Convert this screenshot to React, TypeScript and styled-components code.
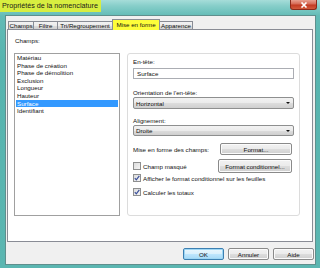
import React from "react";
import styled, { createGlobalStyle } from "styled-components";

const GlobalStyle = createGlobalStyle`
  html, body { margin: 0; padding: 0; width: 320px; height: 268px; overflow: hidden; }
  body { font-family: "Liberation Sans", Arial, sans-serif; }
  * { box-sizing: border-box; }
`;

const Window = styled.div`
  width: 320px;
  height: 268px;
  display: flex;
  flex-direction: column;
  padding: 0 4px 3px 5px;
  background: linear-gradient(180deg, #a6ddd9 0px, #86cec9 6px, #62bbb6 16px, #57b4af 60px, #5bb6b1 100%);
`;

const TitleBar = styled.div`
  height: 16px;
  margin: 0 -4px 0 -5px;
  display: flex;
  align-items: flex-start;
`;

const Title = styled.div`
  height: 12px;
  line-height: 12px;
  padding: 0 3px 0 2px;
  background: #d8ee40;
  color: #1a1a1a;
  font-size: 7.2px;
  white-space: nowrap;
`;

const CloseButton = styled.div`
  margin-left: auto;
  margin-right: 3px;
  width: 27px;
  height: 10px;
  border: 1px solid #8b2a1a;
  border-top: none;
  border-radius: 0 0 3px 3px;
  background: linear-gradient(180deg, #e8a090 0%, #d66a55 45%, #c23a22 55%, #d25a3c 100%);
  display: flex;
  align-items: center;
  justify-content: center;
`;

const Client = styled.div`
  flex: 1;
  background: #f0f0f0;
  border: 1px solid #5f8f8d;
  display: flex;
  flex-direction: column;
  padding: 3px 0 4px 0;
`;

const TabStrip = styled.div`
  display: flex;
  align-items: flex-end;
  height: 11px;
  padding-left: 3px;
  position: relative;
  z-index: 1;
`;

const Tab = styled.div<{ $active?: boolean; $w: number }>`
  width: ${(p) => p.$w}px;
  height: ${(p) => (p.$active ? 11 : 9)}px;
  line-height: ${(p) => (p.$active ? 10 : 8)}px;
  font-size: 6.2px;
  color: #111;
  text-align: center;
  white-space: nowrap;
  border: 1px solid #898c95;
  border-bottom: ${(p) => (p.$active ? "none" : "1px solid #898c95")};
  margin-left: -1px;
  background: ${(p) =>
    p.$active ? "#fdfd3a" : "linear-gradient(180deg, #f2f2f2 0%, #ebebeb 50%, #dddddd 51%, #cfcfcf 100%)"};
`;

const Panel = styled.div`
  margin: -1px 2px 0 1px;
  height: 213px;
  background: #ffffff;
  border: 1px solid #898c95;
  display: grid;
  grid-template-columns: 106px 173px;
  grid-template-rows: 16px 1fr;
  column-gap: 7px;
  padding: 7px 0 0 6px;
`;

const FieldLabel = styled.div`
  font-size: 6.2px;
  line-height: 8px;
  color: #111;
  white-space: nowrap;
`;

const ListLabel = styled(FieldLabel)`
  padding-left: 1px;
  grid-column: 1;
`;

const ListBox = styled.div`
  grid-column: 1;
  grid-row: 2;
  height: 163px;
  border: 1px solid #a0a0a0;
  background: #fff;
  padding: 0 1px;
`;

const ListItem = styled.div<{ $selected?: boolean }>`
  height: 7.6px;
  line-height: 7.6px;
  font-size: 6.2px;
  padding-left: 1px;
  white-space: nowrap;
  color: ${(p) => (p.$selected ? "#fff" : "#111")};
  background: ${(p) => (p.$selected ? "#3399ff" : "transparent")};
`;

const GroupBox = styled.div`
  grid-column: 2;
  grid-row: 2;
  height: 163px;
  border: 1px solid #dcdcdc;
  border-radius: 3px;
  padding: 4px 5px;
  display: flex;
  flex-direction: column;
`;

const TextBox = styled.div`
  margin-top: 2px;
  height: 11px;
  border: 1px solid #abadb3;
  background: #fff;
  font-size: 6.2px;
  line-height: 9px;
  padding-left: 3px;
  color: #111;
`;

const Select = styled.div<{ $h: number }>`
  height: ${(p) => p.$h}px;
  border: 1px solid #8e8f8f;
  border-radius: 2px;
  background: linear-gradient(180deg, #f2f2f2 0%, #ebebeb 50%, #dddddd 51%, #cfcfcf 100%);
  display: flex;
  align-items: center;
  padding: 0 3px 0 2px;
  font-size: 6.2px;
  color: #111;
`;

const SelectText = styled.span`
  flex: 1;
`;

const Arrow = styled.span`
  width: 0;
  height: 0;
  border-left: 2px solid transparent;
  border-right: 2px solid transparent;
  border-top: 2.5px solid #111;
`;

const Spacer = styled.div<{ $h: number }>`
  height: ${(p) => p.$h}px;
  flex: none;
`;

const Row = styled.div<{ $h: number }>`
  height: ${(p) => p.$h}px;
  display: flex;
  align-items: center;
`;

const Button = styled.div<{ $w: number; $h?: number; $default?: boolean }>`
  width: ${(p) => p.$w}px;
  height: ${(p) => p.$h ?? 12}px;
  border: 1px solid ${(p) => (p.$default ? "#3c7fb1" : "#8a8a8a")};
  border-radius: 2px;
  background: ${(p) =>
    p.$default
      ? "linear-gradient(180deg, #eaf6fd 0%, #d9f0fc 50%, #bee6fd 51%, #a7d9f5 100%)"
      : "linear-gradient(180deg, #f2f2f2 0%, #ebebeb 50%, #dddddd 51%, #cfcfcf 100%)"};
  box-shadow: inset 0 0 0 1px ${(p) => (p.$default ? "#9ed6f4" : "#fbfbfb")};
  font-size: 6.2px;
  color: #111;
  display: flex;
  align-items: center;
  justify-content: center;
  white-space: nowrap;
`;

const RowButton = styled(Button)`
  margin-left: auto;
  margin-right: 2px;
`;

const CheckBox = styled.div`
  width: 8px;
  height: 8px;
  flex: none;
  border: 1px solid #8e8f8f;
  background: linear-gradient(135deg, #dcdcdc 0%, #f4f4f4 100%);
  display: flex;
  align-items: center;
  justify-content: center;
  margin-right: 2px;
`;

const CheckLabel = styled.span`
  font-size: 6.2px;
  color: #111;
  white-space: nowrap;
`;

const Footer = styled.div`
  display: flex;
  justify-content: flex-end;
  gap: 4px;
  margin: 6px 1px 0 0;
`;

const Check = ({ checked }: { checked?: boolean }) => (
  <CheckBox>
    {checked && (
      <svg width="6" height="6" viewBox="0 0 6 6">
        <path d="M0.8 3.2 L2.3 4.8 L5.3 0.9" fill="none" stroke="#3a4f9a" strokeWidth="1.2" />
      </svg>
    )}
  </CheckBox>
);

const fields = [
  "Matériau",
  "Phase de création",
  "Phase de démolition",
  "Exclusion",
  "Longueur",
  "Hauteur",
  "Surface",
  "Identifiant",
];

const tabs: { label: string; w: number; active?: boolean }[] = [
  { label: "Champs", w: 26 },
  { label: "Filtre", w: 25 },
  { label: "Tri/Regroupement", w: 56 },
  { label: "Mise en forme", w: 48, active: true },
  { label: "Apparence", w: 34 },
];

export default function App() {
  return (
    <>
      <GlobalStyle />
      <Window>
        <TitleBar>
          <Title>Propriétés de la nomenclature</Title>
          <CloseButton>
            <svg width="8" height="6" viewBox="0 0 8 6">
              <path d="M1.5 0.5 L6.5 5.5 M6.5 0.5 L1.5 5.5" stroke="#fff" strokeWidth="1.6" />
            </svg>
          </CloseButton>
        </TitleBar>
        <Client>
          <TabStrip>
            {tabs.map((t) => (
              <Tab key={t.label} $w={t.w} $active={t.active}>
                {t.label}
              </Tab>
            ))}
          </TabStrip>
          <Panel>
            <ListLabel>Champs:</ListLabel>
            <ListBox>
              {fields.map((f) => (
                <ListItem key={f} $selected={f === "Surface"}>
                  {f}
                </ListItem>
              ))}
            </ListBox>
            <GroupBox>
              <FieldLabel>En-tête:</FieldLabel>
              <TextBox>Surface</TextBox>
              <Spacer $h={10} />
              <FieldLabel>Orientation de l'en-tête:</FieldLabel>
              <Select $h={12}>
                <SelectText>Horizontal</SelectText>
                <Arrow />
              </Select>
              <Spacer $h={8} />
              <FieldLabel>Alignement:</FieldLabel>
              <Select $h={11}>
                <SelectText>Droite</SelectText>
                <Arrow />
              </Select>
              <Spacer $h={7} />
              <Row $h={12}>
                <CheckLabel>Mise en forme des champs:</CheckLabel>
                <RowButton $w={72}>Format...</RowButton>
              </Row>
              <Spacer $h={4} />
              <Row $h={14}>
                <Check />
                <CheckLabel>Champ masqué</CheckLabel>
                <RowButton $w={74} $h={14}>Format conditionnel...</RowButton>
              </Row>
              <Spacer $h={1} />
              <Row $h={8}>
                <Check checked />
                <CheckLabel>Afficher le format conditionnel sur les feuilles</CheckLabel>
              </Row>
              <Spacer $h={6} />
              <Row $h={8}>
                <Check checked />
                <CheckLabel>Calculer les totaux</CheckLabel>
              </Row>
            </GroupBox>
          </Panel>
          <Footer>
            <Button $w={41} $default>OK</Button>
            <Button $w={41}>Annuler</Button>
            <Button $w={41}>Aide</Button>
          </Footer>
        </Client>
      </Window>
    </>
  );
}
